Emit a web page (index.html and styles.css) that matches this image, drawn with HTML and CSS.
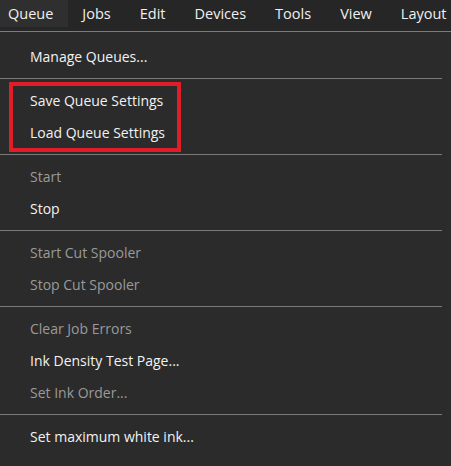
FILE: index.html
```html
<!DOCTYPE html>
<html>
<head>
<meta charset="utf-8">
<link rel="stylesheet" href="styles.css">
</head>
<body>
<div class="app">
  <nav class="menubar">
    <span class="top active">Queue</span>
    <span class="top">Jobs</span>
    <span class="top">Edit</span>
    <span class="top">Devices</span>
    <span class="top">Tools</span>
    <span class="top">View</span>
    <span class="top">Layout</span>
  </nav>
  <div class="menu">
    <div class="item">Manage Queues...</div>
    <div class="sep"></div>
    <div class="group highlight">
      <div class="item">Save Queue Settings</div>
      <div class="item">Load Queue Settings</div>
    </div>
    <div class="sep"></div>
    <div class="item disabled">Start</div>
    <div class="item">Stop</div>
    <div class="sep"></div>
    <div class="item disabled">Start Cut Spooler</div>
    <div class="item disabled">Stop Cut Spooler</div>
    <div class="sep"></div>
    <div class="item disabled">Clear Job Errors</div>
    <div class="item">Ink Density Test Page...</div>
    <div class="item disabled">Set Ink Order...</div>
    <div class="sep"></div>
    <div class="item">Set maximum white ink...</div>
  </div>
</div>
</body>
</html>
```
FILE: styles.css
```css
html, body {
  margin: 0;
  padding: 0;
  background: #2b2b2b;
}
body {
  font-family: "Open Sans", "Noto Sans", sans-serif;
  font-size: 14px;
  color: #f2f2f2;
  width: 451px;
  height: 466px;
  overflow: hidden;
}
.menubar {
  display: flex;
  height: 31px;
  background: #262626;
  border-bottom: 1px solid #7c7c7c;
  font-size: 14.5px;
}
.top {
  display: flex;
  align-items: center;
  height: 27px;
  padding: 0 15px 0 8px;
  margin-right: 6px;
  color: #f0f0f0;
  white-space: nowrap;
}
.top.active {
  background: #2f2f2f;
}
.menu {
  padding-top: 9px;
  width: 442px;
}
.item {
  height: 32px;
  line-height: 32px;
  padding-left: 30px;
  white-space: nowrap;
}
.item.disabled {
  color: #9a9a9a;
}
.sep {
  height: 12px;
  position: relative;
}
.sep::after {
  content: "";
  position: absolute;
  left: 0;
  right: 0;
  top: 5px;
  height: 1px;
  background: #7a7a7a;
}
.group.highlight {
  position: relative;
}
.group.highlight::before {
  content: "";
  position: absolute;
  left: 9px;
  top: -3px;
  width: 164px;
  height: 62px;
  border: 4px solid #e21d2a;
}
```
